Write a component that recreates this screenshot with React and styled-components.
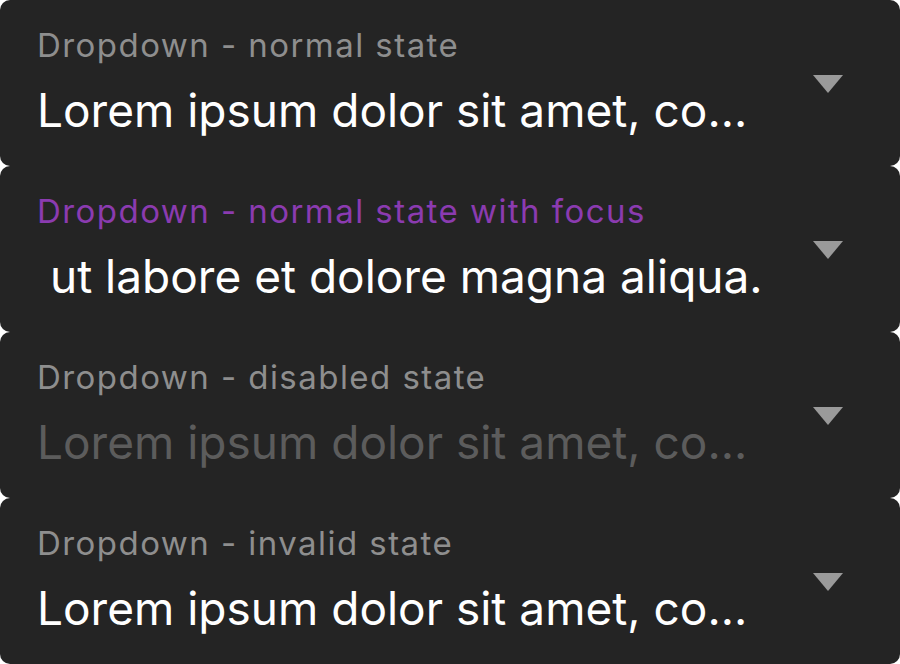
import React from 'react';
import styled, { createGlobalStyle } from 'styled-components';

const GlobalStyle = createGlobalStyle`
  html, body {
    margin: 0;
    padding: 0;
    background: #ffffff;
  }
  body {
    font-family: Inter, Roboto, "Noto Sans", sans-serif;
  }
`

const List = styled.div`
  display: flex;
  flex-direction: column;
  width: 900px;
`

const Field = styled.div`
  position: relative;
  height: 166px;
  box-sizing: border-box;
  background-color: #242424;
  border-radius: 10px;
  padding: 27px 0 0 37px;
  display: flex;
  flex-direction: column;
`

const Label = styled.div`
  font-size: 33px;
  line-height: 36px;
  letter-spacing: 1.45px;
  color: ${p => (p.$focus ? '#8b3bb0' : '#8e8e8e')};
  white-space: nowrap;
`

const Value = styled.div`
  margin-top: 19px;
  font-size: 46px;
  line-height: 56px;
  color: ${p => (p.$disabled ? '#5c5c5c' : '#ffffff')};
  white-space: pre;
`

const Arrow = styled.span`
  position: absolute;
  right: 57px;
  top: 75px;
  width: 0;
  height: 0;
  border-left: 15px solid transparent;
  border-right: 15px solid transparent;
  border-top: 18px solid #9a9a9a;
`

const fields = [
  { label: 'Dropdown - normal state', value: 'Lorem ipsum dolor sit amet, co...' },
  { label: 'Dropdown - normal state with focus', value: ' ut labore et dolore magna aliqua.', focus: true },
  { label: 'Dropdown - disabled state', value: 'Lorem ipsum dolor sit amet, co...', disabled: true },
  { label: 'Dropdown - invalid state', value: 'Lorem ipsum dolor sit amet, co...' },
]

export default function App() {
  return (
    <>
      <GlobalStyle />
      <List>
        {fields.map(f => (
          <Field key={f.label}>
            <Label $focus={f.focus}>{f.label}</Label>
            <Value $disabled={f.disabled}>{f.value}</Value>
            <Arrow />
          </Field>
        ))}
      </List>
    </>
  )
}
